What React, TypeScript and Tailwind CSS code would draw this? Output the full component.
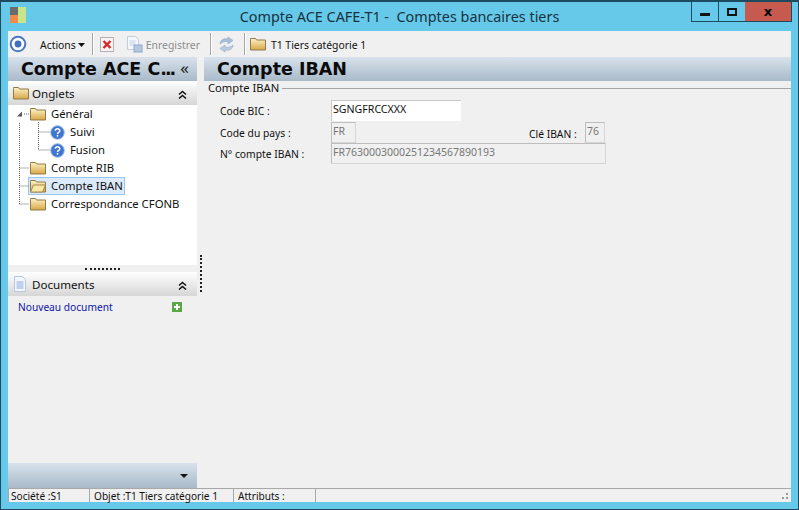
const ui = "font-['Noto_Sans',sans-serif]";

function Folder({ open = false }: { open?: boolean }) {
  return (
    <svg width="16" height="14" viewBox="0 0 16 14" className="shrink-0">
      <defs>
        <linearGradient id="fg" x1="0" y1="0" x2="0" y2="1">
          <stop offset="0" stopColor="#fdf3c4" />
          <stop offset="1" stopColor="#d9a648" />
        </linearGradient>
      </defs>
      <path d="M.5 2.500V1.500h5l1 1.500h9v10H.5z" fill="url(#fg)" stroke="#8f7a4a" />
      {open && <path d="M.5 13l3-7h12l-3 7z" fill="#fbe7a6" stroke="#a18a4f" />}
    </svg>
  );
}

function Help() {
  return (
    <svg width="15" height="15" viewBox="0 0 15 15" className="shrink-0">
      <circle cx="7.5" cy="7.5" r="6.8" fill="#3f76cf" stroke="#9db8e0" />
      <path d="M5.300 5.800c.2-2.600 4.600-2.600 4.500 0 0 1.700-2.300 1.500-2.300 3.200" fill="none" stroke="#fff" strokeWidth="1.5" />
      <rect x="6.700" y="10" width="1.600" height="1.600" fill="#fff" />
    </svg>
  );
}

function Chevrons() {
  return (
    <svg width="9" height="9" viewBox="0 0 9 9" className="shrink-0 mt-[2px]">
      <path d="M1 4.500l3.500-3 3.500 3M1 8.500l3.500-3 3.500 3" fill="none" stroke="#111" strokeWidth="1.500" />
    </svg>
  );
}

function Sep() {
  return <div className="w-px h-[22px] bg-[#a8a8a8] border-r border-white box-content" />;
}

function TreeRow({ indent, label, icon, selected }: { indent: string; label: string; icon: React.ReactNode; selected?: boolean }) {
  return (
    <div className={`h-[18px] flex items-center ${indent}`}>
      <div
        className={`h-[18px] flex items-center pr-[2px] ${
          selected ? "bg-[#dcebfb] outline outline-1 -outline-offset-1 outline-[#9cc3ea]" : ""
        }`}
      >
        {icon}
        <span className="ml-[5px] -mt-[2px] leading-[17px] text-[11.3px] text-[#111] whitespace-nowrap">{label}</span>
      </div>
    </div>
  );
}

function Field({ className, children }: { className: string; children: React.ReactNode }) {
  return (
    <div className={`h-[21px] border-t border-l border-[#bdbdbd] border-r border-b border-r-[#d5d5d5] border-b-[#d5d5d5] pl-[1px] text-[10.5px] leading-[17px] text-[#777] ${className}`}>
      {children}
    </div>
  );
}

export default function App() {
  return (
    <div className={`w-[799px] h-[510px] overflow-hidden bg-[#66c9ea] border border-t-2 border-[#1d4a5e] flex flex-col ${ui}`}>
      <div className="h-[29px] shrink-0 flex relative">
        <svg width="16" height="16" viewBox="0 0 16 16" className="ml-[9px] mt-[5px]">
          <rect x="0" y="0" width="8" height="8" fill="#6b6b6b" />
          <rect x="0" y="8" width="8" height="8" fill="#f08a4b" />
          <rect x="8" y="0" width="8" height="16" fill="#c9e58a" />
        </svg>
        <div className="absolute inset-x-0 top-0 text-center text-[14.4px] leading-[29px] text-[#17323d] whitespace-pre">Compte ACE CAFE-T1 -  Comptes bancaires tiers</div>
        <div className="flex h-[20px] ml-auto mr-[6px] border border-t-0 border-[#1d4a5e] text-black relative">
          <div className="w-[27px] border-r border-[#1d4a5e] flex items-center justify-center">
            <div className="w-[10px] h-[3px] bg-[#111] mt-[5px]" />
          </div>
          <div className="w-[26px] flex items-center justify-center">
            <div className="w-[10px] h-[8px] border-2 border-[#111]" />
          </div>
          <div className="w-[46px] bg-[#c75a4f] flex items-center justify-center text-[13px] font-bold font-['DejaVu_Sans',sans-serif] leading-none">x</div>
        </div>
      </div>

      <div className="flex-1 min-h-0 mx-[7px] mb-[7px] bg-[#f0f0f0] flex flex-col">
        <div className="h-[26px] shrink-0 flex items-center text-[10.4px] leading-[16px] text-[#111] whitespace-nowrap">
          <svg width="18" height="18" viewBox="0 0 18 18" className="ml-[1px]">
            <circle cx="9" cy="9" r="7.300" fill="#fff" stroke="#4a76c4" strokeWidth="2" />
            <circle cx="9" cy="9" r="3.400" fill="#3f6fc0" />
          </svg>
          <span className="ml-[13px] mt-[2px]">Actions</span>
          <svg width="7" height="4" viewBox="0 0 7 4" className="ml-[2px] mt-[2px]"><path d="M0 0h7L3.500 4z" fill="#111" /></svg>
          <div className="ml-[7px]"><Sep /></div>
          <svg width="14" height="15" viewBox="0 0 14 15" className="ml-[6px]">
            <rect x=".5" y=".5" width="13" height="14" fill="#f6f3f3" stroke="#b9aeb6" />
            <path d="M3.500 4l7 7M10.500 4l-7 7" stroke="#d6282b" strokeWidth="2.400" />
          </svg>
          <svg width="18" height="17" viewBox="0 0 18 17" className="ml-[12px]">
            <path d="M1.500.5h8l3 3v10h-11z" fill="#f3f6fa" stroke="#c3cedd" />
            <path d="M3.500 5h6M3.500 7h6M3.500 9h6" stroke="#c4d2e6" />
            <rect x="8" y="9" width="8" height="7" fill="#b6c8e0" stroke="#91a8c6" />
          </svg>
          <span className="ml-[2px] mt-[2px] text-[#8c8c8c]">Enregistrer</span>
          <div className="ml-[10px]"><Sep /></div>
          <svg width="17" height="17" viewBox="0 0 17 17" className="ml-[6px]">
            <path d="M2 8c0-4 4-6 8-5V1l5 3.500L10 8V6C7 5 4 6 2 8z" fill="#a9bfd9" stroke="#8ea8c8" strokeWidth=".6" />
            <path d="M15 9c0 4-4 6-8 5v2l-5-3.500L7 9v2c3 1 6 0 8-2z" fill="#b9cbe0" stroke="#8ea8c8" strokeWidth=".6" />
          </svg>
          <div className="ml-[9px]"><Sep /></div>
          <div className="ml-[4px]"><Folder /></div>
          <span className="ml-[5px] mt-[2px]">T1 Tiers catégorie 1</span>
        </div>

        <div className="flex-1 min-h-0 flex">
          <div className="w-[189px] shrink-0 flex flex-col">
            <div className="h-[24px] shrink-0 bg-gradient-to-b from-[#d8e2ec] to-[#a9bac9] flex items-center pl-[13px] pr-[8px] justify-between">
              <span className="pt-[2px] text-[17.5px] font-bold font-['DejaVu_Sans',sans-serif] text-[#0b0b0b] leading-none whitespace-nowrap">Compte ACE C<span className="tracking-[-2px]">...</span></span>
              <span className="text-[17px] leading-none text-[#222] -mt-[3px]">«</span>
            </div>
            <div className="h-[24px] shrink-0 bg-gradient-to-b from-white to-[#d6d6d6] flex items-center pl-[5px] pr-[10px]">
              <Folder />
              <span className="ml-[3px] mt-[2px] text-[11.6px] text-[#111] flex-1">Onglets</span>
              <Chevrons />
            </div>
            <div className="h-[160px] shrink-0 bg-white relative">
              <svg width="60" height="110" className="absolute left-0 top-0">
                <path d="M11.500 18V99M11.500 63h10M11.500 81h10M11.500 99h10M30.500 17V45M30.500 27h11M30.500 45h11M16 9h5" fill="none" stroke="#666" strokeDasharray="1 1" />
                <path d="M9 11.500h5V6.500z" fill="#555" />
              </svg>
              <TreeRow indent="pl-[22px]" label="Général" icon={<Folder />} />
              <TreeRow indent="pl-[42px]" label="Suivi" icon={<Help />} />
              <TreeRow indent="pl-[42px]" label="Fusion" icon={<Help />} />
              <TreeRow indent="pl-[22px]" label="Compte RIB" icon={<Folder />} />
              <TreeRow indent="pl-[20px]" label="Compte IBAN" selected icon={<div className="pl-[2px]"><Folder open /></div>} />
              <TreeRow indent="pl-[22px]" label="Correspondance CFONB" icon={<Folder />} />
            </div>
            <div className="h-[7px] shrink-0 bg-[#f0f0f0] flex items-center justify-center pt-[1px]">
              <div className="w-[35px] border-t-2 border-dotted border-[#222]" />
            </div>
            <div className="h-[24px] shrink-0 bg-gradient-to-b from-white to-[#d6d6d6] flex items-center pl-[5px] pr-[10px]">
              <svg width="14" height="16" viewBox="0 0 14 16" className="shrink-0">
                <path d="M1.500.5h8l3 3v12h-11z" fill="#f3f7fd" stroke="#b4c6e4" />
                <path d="M3.500 6h7M3.500 8h7M3.500 10h7M3.500 12h7" stroke="#8fa9d8" />
              </svg>
              <span className="ml-[5px] mt-[2px] text-[11.6px] text-[#111] flex-1">Documents</span>
              <Chevrons />
            </div>
            <div className="flex-1 flex items-start justify-between pl-[10px] pr-[15px] pt-[2px]">
              <span className="text-[10.2px] text-[#0b16a8] leading-[18px]">Nouveau document</span>
              <svg width="10" height="10" viewBox="0 0 10 10" className="mt-[4px]">
                <rect width="10" height="10" fill="#5aa845" />
                <path d="M5 2v6M2 5h6" stroke="#fff" strokeWidth="2" />
              </svg>
            </div>
            <div className="h-[25px] shrink-0 bg-gradient-to-b from-[#d8e2ec] to-[#a9bac9] flex items-center justify-end pr-[9px]">
              <svg width="8" height="4" viewBox="0 0 8 4" className="mt-[1px]"><path d="M0 0h8L4 4z" fill="#111" /></svg>
            </div>
          </div>

          <div className="w-[7px] shrink-0 flex flex-col items-end pt-[198px]">
            <div className="h-[37px] border-r-2 border-dotted border-[#222] mr-[2px]" />
          </div>

          <div className="flex-1 min-w-0 flex flex-col">
            <div className="h-[24px] shrink-0 bg-gradient-to-b from-[#d8e2ec] to-[#a9bac9] flex items-center pl-[13px]">
              <span className="pt-[2px] text-[17.5px] font-bold font-['DejaVu_Sans',sans-serif] text-[#0b0b0b] leading-none">Compte IBAN</span>
            </div>
            <div className="flex items-center h-[14px] pl-[4px] text-[11.2px] text-[#111]">
              <span className="whitespace-nowrap">Compte IBAN</span>
              <div className="ml-[3px] flex-1 border-t border-[#a5a5a5] border-b-0" />
            </div>
            <div className="pl-[16px] pt-[5px] text-[10.3px] text-[#111]">
              <div className="flex items-start h-[21px]">
                <span className="w-[111px] leading-[23px]">Code BIC :</span>
                <div className="w-[130px] h-[21px] bg-white border-t border-l border-[#c8c8c8] pl-[1px] text-[10.6px] leading-[17px] text-[#111]">SGNGFRCCXXX</div>
              </div>
              <div className="flex items-start h-[21px] mt-[1px]">
                <span className="w-[111px] leading-[23px]">Code du pays :</span>
                <Field className="w-[25px]">FR</Field>
                <span className="ml-[173px] w-[56px] leading-[24px] whitespace-nowrap">Clé IBAN :</span>
                <Field className="w-[20px]">76</Field>
              </div>
              <div className="flex items-start h-[21px]">
                <span className="w-[111px] leading-[23px]">N° compte IBAN :</span>
                <Field className="w-[275px]">FR7630003000251234567890193</Field>
              </div>
            </div>
          </div>
        </div>

        <div className="h-[14px] shrink-0 border-t border-[#a8a8a8] flex text-[10.1px] leading-[14px] text-[#111] whitespace-nowrap">
          <div className="w-[81px] pl-[2px] border-l border-[#a8a8a8]">Société :S1</div>
          <div className="w-[144px] pl-[4px] border-l border-[#a8a8a8]">Objet :T1 Tiers catégorie 1</div>
          <div className="w-[82px] pl-[4px] border-l border-[#a8a8a8]">Attributs :</div>
          <div className="flex-1 border-l border-[#a8a8a8] flex justify-end items-end pr-[2px] pb-[2px]">
            <svg width="8" height="7" viewBox="0 0 8 7"><path d="M5 0h2v2H5zM1 4h2v2H1zM5 4h2v2H5z" fill="#9a9a9a" /></svg>
          </div>
        </div>
      </div>
    </div>
  );
}
